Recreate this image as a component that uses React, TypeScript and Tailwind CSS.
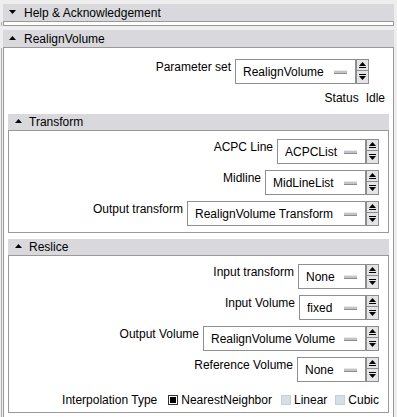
import React from 'react';

function Tri({ up }: { up: boolean }) {
  return (
    <svg width="7" height="4" viewBox="0 0 7 4" className="shrink-0">
      <path d={up ? 'M0 4 L3.5 0 L7 4 Z' : 'M0 0 L7 0 L3.5 4 Z'} fill="#000" />
    </svg>
  );
}

function Spinner() {
  return (
    <div className="flex h-[25px] w-[13px] flex-col">
      <div className="flex h-[12px] items-center justify-center border border-[#8c8c8c] bg-[#e4e4e6]">
        <svg width="7" height="6" viewBox="0 0 7 6">
          <path d="M0 4 L3.5 0 L7 4 Z" fill="#000" />
          <rect x="0" y="5" width="7" height="1" fill="#000" />
        </svg>
      </div>
      <div className="flex h-[13px] items-center justify-center border border-t-0 border-[#8c8c8c] bg-[#e4e4e6]">
        <svg width="7" height="6" viewBox="0 0 7 6">
          <rect x="0" y="0" width="7" height="1" fill="#000" />
          <path d="M0 2 L7 2 L3.5 6 Z" fill="#000" />
        </svg>
      </div>
    </div>
  );
}

function Combo({ label, value, w }: { label: string; value: string; w: string }) {
  return (
    <div className="flex items-start justify-end">
      <span className="mr-[4px] pt-[1px] leading-[14px]">{label}</span>
      <div
        className={`flex h-[25px] items-center justify-between border border-[#8f8f8f] bg-white pl-[7px] pr-[8px] ${w}`}
      >
        <span className="leading-[14px]">{value}</span>
        <div className="h-[4px] w-[13px] border-t border-b border-t-[#e8e8e8] border-b-[#8c8c8c] bg-[#c4c4c8]" />
      </div>
      <Spinner />
    </div>
  );
}

function Check({ label, on }: { label: string; on?: boolean }) {
  return (
    <div className="flex items-center">
      {on ? (
        <div className="flex h-[10px] w-[10px] items-center justify-center border border-[#333] bg-white">
          <div className="h-[6px] w-[6px] bg-black" />
        </div>
      ) : (
        <div className="h-[10px] w-[10px] border border-[#c8d0d8] bg-[#d6dde5]" />
      )}
      <span className="ml-[3px] leading-[14px]">{label}</span>
    </div>
  );
}

function SubHeader({ title }: { title: string }) {
  return (
    <div className="flex h-[17px] items-center border-b border-[#999] bg-[#d9d9dd] pl-[7px]">
      <div className="-mt-[2px]">
        <Tri up />
      </div>
      <span className="ml-[7px] leading-[14px]">{title}</span>
    </div>
  );
}

export default function App() {
  return (
    <div className="h-[417px] w-[397px] overflow-hidden bg-[#eeeeee] pt-[4px] font-['Liberation_Sans',Arial,sans-serif] text-[12px] text-black">
      {/* Help & Acknowledgement (collapsed) */}
      <div className="ml-[3px] w-[391px]">
        <div className="flex h-[18px] items-center border-b border-[#999] bg-[#d9d9dd] pl-[6px]">
          <div className="-mt-[2px]">
            <Tri up={false} />
          </div>
          <span className="ml-[8px] leading-[14px]">Help &amp; Acknowledgement</span>
        </div>
      </div>
      <div className="ml-[1px] w-[393px] border-l border-[#b0b0b0] pl-[1px]">
        <div className="h-[4px] border-r border-b border-l border-[#999] bg-white" />
      </div>

      {/* RealignVolume */}
      <div className="mt-[4px] ml-[3px] w-[391px]">
        <div className="flex h-[18px] items-center border-b border-[#999] bg-[#d9d9dd] pl-[6px]">
          <div className="-mt-[2px]">
            <Tri up />
          </div>
          <span className="ml-[8px] leading-[14px]">RealignVolume</span>
        </div>
      </div>
      <div className="ml-[1px] w-[393px] border-l border-[#b0b0b0] pl-[1px]">
        <div className="h-[400px] border-r border-l border-[#999] bg-white pt-[11px]">
          <div className="pr-[24px]">
            <Combo label="Parameter set" value="RealignVolume" w="w-[121px]" />
          </div>
          <div className="mt-[7px] flex justify-end pr-[8px] leading-[14px]">
            <span>Status</span>
            <span className="ml-[7px]">Idle</span>
          </div>

          {/* Transform */}
          <div className="mx-[4px] mt-[9px]">
            <SubHeader title="Transform" />
            <div className="flex flex-col gap-[6px] border-r border-b border-l border-[#999] pt-[8px] pr-[9px] pb-[6px]">
              <Combo label="ACPC Line" value="ACPCList" w="w-[89px]" />
              <Combo label="Midline" value="MidLineList" w="w-[101px]" />
              <Combo label="Output transform" value="RealignVolume Transform" w="w-[179px]" />
            </div>
          </div>

          {/* Reslice */}
          <div className="mx-[4px] mt-[6px]">
            <SubHeader title="Reslice" />
            <div className="border-r border-b border-l border-[#999] pt-[8px] pr-[9px] pb-[5px]">
              <div className="flex flex-col gap-[6px]">
                <Combo label="Input transform" value="None" w="w-[68px]" />
                <Combo label="Input Volume" value="fixed" w="w-[67px]" />
                <Combo label="Output Volume" value="RealignVolume Volume" w="w-[163px]" />
                <Combo label="Reference Volume" value="None" w="w-[69px]" />
              </div>
              <div className="mt-[11px] flex items-center justify-end">
                <span className="mr-[11px] leading-[14px]">Interpolation Type</span>
                <Check label="NearestNeighbor" on />
                <div className="w-[9px]" />
                <Check label="Linear" />
                <div className="w-[8px]" />
                <Check label="Cubic" />
              </div>
            </div>
          </div>
        </div>
      </div>
    </div>
  );
}
